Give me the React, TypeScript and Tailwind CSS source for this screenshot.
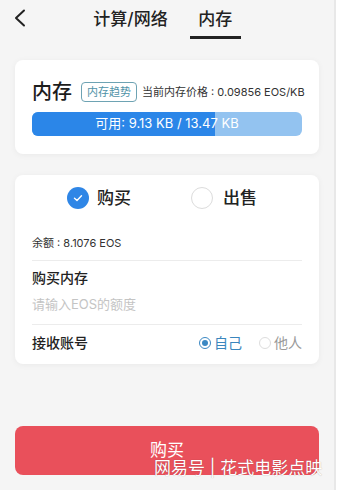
import React from 'react';

const FONT = { fontFamily: 'Inter, "Noto Sans CJK SC", sans-serif' };

const CheckCircle: React.FC<{ checked: boolean }> = ({ checked }) =>
  checked ? (
    <div className="w-[22px] h-[22px] rounded-full bg-[#2f86e6] flex items-center justify-center">
      <svg width="12" height="12" viewBox="0 0 12 12" fill="none">
        <path d="M2.5 6.2 L5 8.5 L9.5 3.8" stroke="white" strokeWidth="1.4" strokeLinecap="round" strokeLinejoin="round" />
      </svg>
    </div>
  ) : (
    <div className="w-[22px] h-[22px] rounded-full border border-[#dcdcdc] bg-white" />
  );

const SmallRadio: React.FC<{ checked: boolean; label: string }> = ({ checked, label }) => (
  <div className="flex items-center gap-[3px]">
    {checked ? (
      <div className="w-[12px] h-[12px] rounded-full border border-[#3b88c3] flex items-center justify-center">
        <div className="w-[6px] h-[6px] rounded-full bg-[#3b88c3]" />
      </div>
    ) : (
      <div className="w-[12px] h-[12px] rounded-full border border-[#dddddd]" />
    )}
    <span className={`text-[14px] leading-[20px] ${checked ? 'text-[#3a86bd]' : 'text-[#9a9a9a]'}`}>{label}</span>
  </div>
);

export default function App() {
  const total = 13.47;
  const avail = 9.13;
  const pct = (avail / total) * 100;

  return (
    <div className="relative w-[338px] h-[490px] overflow-hidden bg-white" style={FONT}>
      <div className="w-[336px] h-full bg-[#f5f5f5] border-r-2 border-[#e8e8e8]">
        {/* header */}
        <div className="relative h-[46px] flex items-start justify-center">
          <svg className="absolute left-[13px] top-[9px]" width="14" height="18" viewBox="0 0 14 18" fill="none">
            <path d="M11 1.5 L3 9 L11 16.5" stroke="#222" strokeWidth="2" strokeLinecap="round" strokeLinejoin="round" />
          </svg>
          <div className="flex items-start gap-[22px] pt-[8px]">
            <span className="text-[17px] leading-[22px] font-medium text-[#222]">计算/网络</span>
            <div className="flex flex-col items-center">
              <span className="text-[17px] leading-[22px] font-medium text-[#222]">内存</span>
              <div className="w-[51px] h-[3px] bg-[#222] mt-[6px]" />
            </div>
          </div>
        </div>

        {/* memory card */}
        <div className="mx-[15px] mt-[14px] bg-white rounded-[8px] shadow-[0_1px_6px_rgba(0,0,0,0.05)] pt-[18px] pb-[18px] px-[17px]">
          <div className="flex items-center h-[28px] whitespace-nowrap">
            <span className="shrink-0 text-[20px] leading-[28px] font-medium text-[#1d1d1d]">内存</span>
            <span className="shrink-0 ml-[9px] border border-[#6ea3b3] rounded-[4px] px-[5px] h-[20px] flex items-center text-[11px] text-[#4f93a8]">
              内存趋势
            </span>
            <span className="shrink-0 ml-[5px] text-[11px] text-[#333]">当前内存价格 : 0.09856 EOS/KB</span>
          </div>
          <div className="relative mt-[6px] h-[24px] rounded-[6px] bg-[#93c3f0] overflow-hidden">
            <div className="h-full bg-[#2b86e8]" style={{ width: `${pct}%` }} />
            <div className="absolute inset-0 flex items-center justify-center text-[13px] text-white">
              可用: 9.13 KB / 13.47 KB
            </div>
          </div>
        </div>

        {/* trade card */}
        <div className="mx-[15px] mt-[21px] bg-white rounded-[8px] shadow-[0_1px_6px_rgba(0,0,0,0.05)] pt-[12px] pb-[11px] px-[17px]">
          <div className="flex items-center gap-[60px] pl-[35px]">
            <div className="flex items-center gap-[8px]">
              <CheckCircle checked />
              <span className="text-[17px] leading-[22px] font-medium text-[#222]">购买</span>
            </div>
            <div className="flex items-center gap-[10px]">
              <CheckCircle checked={false} />
              <span className="text-[17px] leading-[22px] font-medium text-[#222]">出售</span>
            </div>
          </div>
          <div className="mt-[26px] text-[11px] leading-[16px] text-[#333]">余额 : 8.1076 EOS</div>
          <div className="mt-[9px] h-px bg-[#ececec]" />
          <div className="mt-[7px] text-[14px] leading-[20px] font-medium text-[#222]">购买内存</div>
          <div className="mt-[7px] text-[13px] leading-[18px] text-[#c4c4c4]">请输入EOS的额度</div>
          <div className="mt-[11px] h-px bg-[#ececec]" />
          <div className="mt-[8px] flex items-center justify-between h-[20px]">
            <span className="text-[14px] leading-[20px] font-medium text-[#222]">接收账号</span>
            <div className="flex items-center gap-[17px]">
              <SmallRadio checked label="自己" />
              <SmallRadio checked={false} label="他人" />
            </div>
          </div>
        </div>

        {/* buy button */}
        <div className="mx-[15px] mt-[62px] h-[49px] rounded-[8px] bg-[#e9505b] flex items-start justify-center pt-[15px]">
          <span className="text-[17px] leading-[18px] text-white">购买</span>
        </div>
      </div>

      {/* watermark */}
      <div className="absolute left-[154px] top-[458px] text-[17px] leading-[20px] text-white whitespace-nowrap [text-shadow:0_0_1px_rgba(0,0,0,0.35)]">
        网易号 | 花式电影点映
      </div>
    </div>
  );
}
